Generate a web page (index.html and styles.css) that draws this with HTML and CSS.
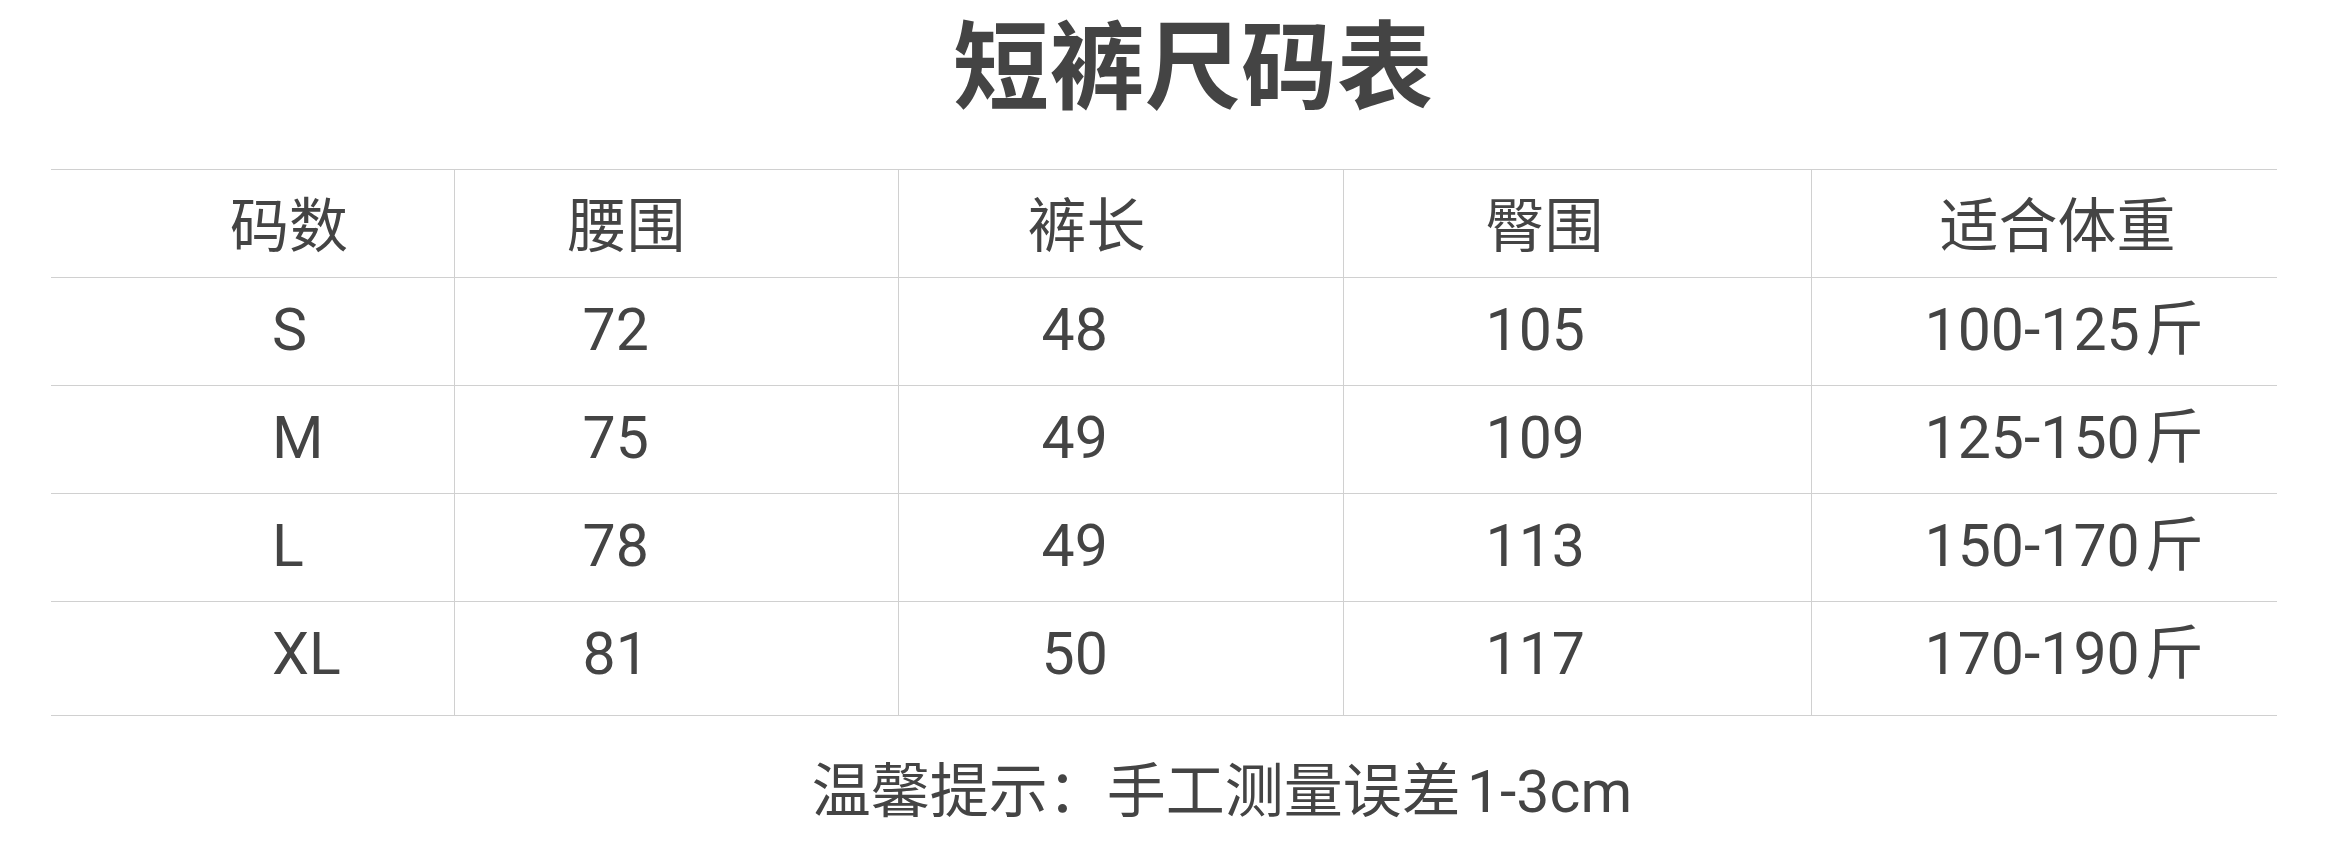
FILE: index.html
```html
<!DOCTYPE html>
<html lang="zh-CN">
<head>
<meta charset="utf-8">
<title>短裤尺码表</title>
<link rel="stylesheet" href="styles.css">
</head>
<body>
<main class="page">
  <h1 class="title">短裤尺码表</h1>
  <table class="size-table">
    <colgroup>
      <col class="w1"><col class="w2"><col class="w3"><col class="w4"><col class="w5">
    </colgroup>
    <thead>
      <tr><th>码数</th><th>腰围</th><th>裤长</th><th>臀围</th><th>适合体重</th></tr>
    </thead>
    <tbody>
      <tr><td>S</td><td>72</td><td>48</td><td>105</td><td>100-125<span class="unit">斤</span></td></tr>
      <tr><td>M</td><td>75</td><td>49</td><td>109</td><td>125-150<span class="unit">斤</span></td></tr>
      <tr><td>L</td><td>78</td><td>49</td><td>113</td><td>150-170<span class="unit">斤</span></td></tr>
      <tr class="last"><td>XL</td><td>81</td><td>50</td><td>117</td><td>170-190<span class="unit">斤</span></td></tr>
    </tbody>
  </table>
  <p class="tip">温馨提示：手工测量误差<span class="range">1-3cm</span></p>
</main>
</body>
</html>
```

FILE: styles.css
```css
html, body {
  margin: 0;
  padding: 0;
  background: #ffffff;
}

.page {
  width: 2342px;
  height: 852px;
  display: flex;
  flex-direction: column;
  color: #444444;
  font-family: Roboto, "Noto Sans CJK SC", sans-serif;
}

.title {
  margin: 8px 0 0 0;
  padding-left: 44px;
  height: 104px;
  font-family: "Noto Sans CJK SC", sans-serif;
  font-size: 96px;
  line-height: 104px;
  font-weight: 700;
  text-align: center;
  color: #444444;
}

.size-table {
  margin: 57px 0 0 51px;
  width: 2226px;
  table-layout: fixed;
  border-collapse: collapse;
  font-size: 59px;
  line-height: 1;
}

.w1 { width: 403px; }
.w2 { width: 444px; }
.w3 { width: 445px; }
.w4 { width: 468px; }
.w5 { width: 466px; }

.size-table th,
.size-table td {
  height: 108px;
  padding: 0 0 5px 0;
  box-sizing: border-box;
  border-top: 1px solid #d0d0d0;
  border-bottom: 1px solid #d0d0d0;
  border-left: 1px solid #d0d0d0;
  text-align: left;
  vertical-align: middle;
  font-weight: 400;
  white-space: nowrap;
}

.size-table th:first-child,
.size-table td:first-child {
  border-left: none;
}

.size-table th {
  font-family: "Noto Sans CJK SC", sans-serif;
}

.size-table th:nth-child(1) { padding-left: 179px; }
.size-table th:nth-child(2) { padding-left: 113px; }
.size-table th:nth-child(3) { padding-left: 129px; }
.size-table th:nth-child(4) { padding-left: 142px; }
.size-table th:nth-child(5) { padding-left: 128px; }

.size-table td:nth-child(1) { padding-left: 221px; }
.size-table td:nth-child(2) { padding-left: 128px; }
.size-table td:nth-child(3) { padding-left: 143px; }
.size-table td:nth-child(4) { padding-left: 142px; }
.size-table td:nth-child(5) { padding-left: 113px; }

.unit {
  margin-left: 5px;
}

.size-table tr.last td {
  height: 114px;
  padding-bottom: 11px;
}

.tip {
  margin: 46px 0 0 0;
  padding-left: 102px;
  font-size: 59px;
  line-height: 1;
  text-align: center;
  white-space: nowrap;
}

.range {
  margin-left: 6px;
}
```
